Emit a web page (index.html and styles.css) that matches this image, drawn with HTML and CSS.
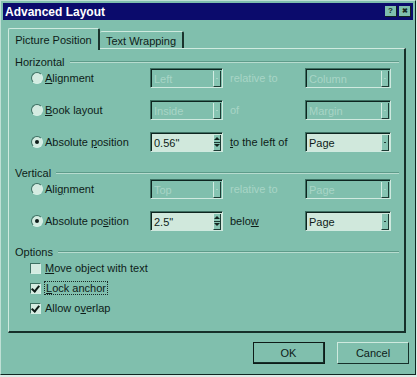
FILE: index.html
```html
<!DOCTYPE html>
<html>
<head>
    <title>Advanced Layout</title>
    <link rel="stylesheet" href="styles.css">
</head>
<body>
    <div class="dialog">
        <div class="titlebar">
            <span class="title">Advanced Layout</span>
            <span class="tb-btn">?</span>
            <span class="tb-btn close">&#x2716;</span>
        </div>

        <div class="tabs">
            <div class="tab active">Picture Position</div>
            <div class="tab">Text Wrapping</div>
        </div>

        <div class="panel">
            <div class="group-head"><span>Horizontal</span></div>
            <div class="row">
                <label class="opt"><span class="radio"></span><span><u>A</u>lignment</span></label>
                <div class="combo disabled"><span class="val">Left</span><span class="drop"></span></div>
                <span class="rel disabled-text">relative to</span>
                <div class="combo wide disabled"><span class="val">Column</span><span class="drop"></span></div>
            </div>
            <div class="row">
                <label class="opt"><span class="radio"></span><span><u>B</u>ook layout</span></label>
                <div class="combo disabled"><span class="val">Inside</span><span class="drop"></span></div>
                <span class="rel disabled-text">of</span>
                <div class="combo wide disabled"><span class="val">Margin</span><span class="drop"></span></div>
            </div>
            <div class="row">
                <label class="opt"><span class="radio checked"></span><span>Absolute <u>p</u>osition</span></label>
                <div class="combo"><span class="val">0.56"</span><span class="spin"><i class="up"></i><i class="down"></i></span></div>
                <span class="rel"><u>t</u>o the left of</span>
                <div class="combo wide"><span class="val">Page</span><span class="drop"></span></div>
            </div>

            <div class="group-head gap"><span>Vertical</span></div>
            <div class="row">
                <label class="opt"><span class="radio"></span><span>Ali<u>g</u>nment</span></label>
                <div class="combo disabled"><span class="val">Top</span><span class="drop"></span></div>
                <span class="rel disabled-text">relative to</span>
                <div class="combo wide disabled"><span class="val">Page</span><span class="drop"></span></div>
            </div>
            <div class="row">
                <label class="opt"><span class="radio checked"></span><span>Absolute po<u>s</u>ition</span></label>
                <div class="combo"><span class="val">2.5"</span><span class="spin"><i class="up"></i><i class="down"></i></span></div>
                <span class="rel">belo<u>w</u></span>
                <div class="combo wide"><span class="val">Page</span><span class="drop"></span></div>
            </div>

            <div class="group-head gap"><span>Options</span></div>
            <label class="check"><span class="box"></span><span><u>M</u>ove object with text</span></label>
            <label class="check"><span class="box checked"></span><span class="focus"><u>L</u>ock anchor</span></label>
            <label class="check"><span class="box checked"></span><span>Allow o<u>v</u>erlap</span></label>
        </div>

        <div class="buttons">
            <div class="btn default">OK</div>
            <div class="btn">Cancel</div>
        </div>
    </div>
</body>
</html>
```

FILE: styles.css
```css
body {
    margin: 0;
    background: #dcece6;
    font-family: "Liberation Sans", Arial, sans-serif;
    font-size: 11px;
    color: #0e1c18;
}

.dialog {
    width: 416px;
    height: 375px;
    box-sizing: border-box;
    padding: 2px;
    background: #80bfad;
    border: 1px solid;
    border-color: #bfe0d5 #0f2621 #0f2621 #bfe0d5;
}

.titlebar {
    height: 17px;
    background: #0b0b6c;
    display: flex;
    align-items: center;
    padding: 0 2px 0 2px;
}

.title {
    flex: 1;
    color: #fff;
    font-weight: bold;
    font-size: 12px;
}

.tb-btn {
    width: 11px;
    height: 10px;
    margin-left: 2px;
    background: #7fbfad;
    border-right: 1px solid #10241f;
    border-bottom: 1px solid #10241f;
    font-size: 8px;
    font-weight: bold;
    line-height: 10px;
    text-align: center;
    color: #1a2a26;
}

.tb-btn.close {
    font-size: 7px;
}

.tabs {
    display: flex;
    align-items: flex-end;
    margin: 8px 0 0 5px;
    height: 20px;
    position: relative;
    z-index: 1;
}

.tab {
    height: 17px;
    line-height: 18px;
    white-space: nowrap;
    text-align: center;
    border-top: 1px solid #cfeadf;
    border-left: 1px solid #cfeadf;
    border-right: 2px solid #1a332d;
    border-radius: 2px 2px 0 0;
    box-sizing: border-box;
}

.tab.active {
    height: 22px;
    line-height: 23px;
    width: 92px;
    margin-bottom: -2px;
    background: #80bfad;
}

.tab:not(.active) {
    width: 84px;
    border-left: none;
}

.panel {
    margin-left: 5px;
    width: 398px;
    height: 285px;
    box-sizing: border-box;
    border: 1px solid;
    border-width: 1px 2px 2px 1px;
    border-color: #cfeadf #16302a #16302a #cfeadf;
    padding: 6px 0 0 6px;
}

.group-head {
    display: flex;
    align-items: center;
    height: 13px;
    margin-right: 5px;
}

.group-head::after {
    content: "";
    flex: 1;
    margin-left: 5px;
    border-top: 1px solid #5e9b8a;
    border-bottom: 1px solid #b7dccf;
}

.group-head.gap {
    margin-top: 14px;
}

.row {
    display: grid;
    grid-template-columns: 119px 73px 82px 86px;
    align-items: center;
    height: 20px;
    margin-left: 16px;
    white-space: nowrap;
}

.row + .row {
    margin-top: 12px;
}

.opt, .check {
    display: flex;
    align-items: center;
    white-space: nowrap;
}

.radio {
    width: 12px;
    height: 12px;
    box-sizing: border-box;
    border-radius: 50%;
    border: 1px solid;
    border-color: #3c6f61 #d6efe6 #d6efe6 #3c6f61;
    background: #d4ebe1;
    margin-right: 2px;
    position: relative;
}

.radio.checked::after {
    content: "";
    position: absolute;
    left: 3px;
    top: 3px;
    width: 4px;
    height: 4px;
    border-radius: 50%;
    background: #0e1c18;
}

.rel {
    padding-left: 7px;
}

.disabled-text {
    color: #a8d5c6;
}

.combo {
    height: 20px;
    box-sizing: border-box;
    border: 1px solid;
    border-color: #3d7062 #cfe9df #cfe9df #3d7062;
    box-shadow: inset 1px 1px 0 #0e2520;
    background: #d0e8dc;
    display: flex;
    align-items: center;
}

.combo.disabled {
    background: #80bfad;
}

.combo.disabled .val {
    color: #a8d5c6;
}

.val {
    flex: 1;
    padding-left: 3px;
    padding-top: 1px;
}

.drop, .spin {
    width: 8px;
    height: 16px;
    margin-right: 1px;
    margin-top: 1px;
    box-sizing: border-box;
    border-left: 1px solid #d3ede3;
    border-right: 1px solid #1c3a33;
    border-bottom: 1px solid #1c3a33;
    background: #86c4b2;
    position: relative;
}

.drop::after {
    content: "";
    position: absolute;
    left: 2px;
    top: 7px;
    width: 2px;
    height: 1px;
    background: #1e3a33;
}

.combo.disabled .drop::after {
    background: #a8d5c6;
}

.spin i {
    display: block;
    height: 7px;
    position: relative;
}

.spin i::after {
    content: "";
    position: absolute;
    left: 0px;
    border-left: 3px solid transparent;
    border-right: 3px solid transparent;
}

.spin .up::after {
    top: 2px;
    border-bottom: 3px solid #13241f;
}

.spin .down {
    border-top: 1px solid #1c3a33;
}

.spin .down::after {
    top: 1px;
    border-top: 3px solid #13241f;
}

.check {
    height: 20px;
    margin-left: 15px;
}

.box {
    width: 11px;
    height: 11px;
    box-sizing: border-box;
    border: 1px solid;
    border-color: #3c6f61 #d6efe6 #d6efe6 #3c6f61;
    background: #d4ebe1;
    margin-right: 4px;
    position: relative;
}

.box.checked::after {
    content: "";
    position: absolute;
    left: 2px;
    top: 0px;
    width: 3px;
    height: 6px;
    border-right: 2px solid #0e1c18;
    border-bottom: 2px solid #0e1c18;
    transform: rotate(40deg);
}

.focus {
    outline: 1px dotted #1a2a26;
    padding: 0 1px;
}

.buttons {
    display: flex;
    justify-content: flex-end;
    gap: 12px;
    margin-top: 9px;
    margin-right: 4px;
}

.btn {
    width: 72px;
    height: 22px;
    box-sizing: border-box;
    border: 1px solid;
    border-color: #cfeadf #16302a #16302a #cfeadf;
    text-align: center;
    line-height: 20px;
}

.btn.default {
    outline: 1px solid #0e1c18;
    outline-offset: -1px;
    border-width: 1px 2px 2px 1px;
}
```
